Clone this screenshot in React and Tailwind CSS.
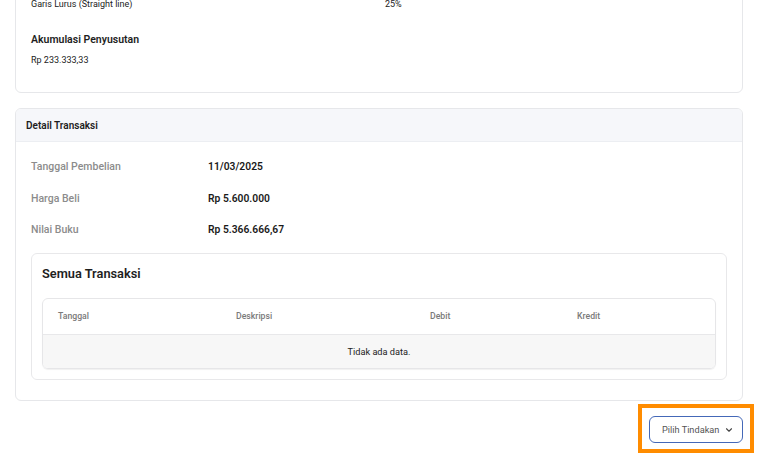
import React from "react";

function Chevron() {
  return (
    <svg width="10" height="10" viewBox="0 0 24 24" fill="none" stroke="#444" strokeWidth="2.6" strokeLinecap="round" strokeLinejoin="round">
      <path d="M6 9l6 6 6-6" />
    </svg>
  );
}

export default function App() {
  const font = { fontFamily: "Roboto, 'Noto Sans', sans-serif" };
  return (
    <div className="w-[759px] h-[459px] overflow-hidden bg-white" style={font}>
      <div className="pl-[15px] pr-[16px]">
        {/* top card (scrolled) */}
        <div className="-mt-[20px] border border-[#e6e7ea] rounded-[6px] px-[15px] pt-[16px] pb-[25px]">
          <div className="grid grid-cols-2 gap-3 text-[9px] text-[#222] leading-[14px]">
            <div>Garis Lurus (Straight line)</div>
            <div>25%</div>
          </div>
          <div className="mt-[22px] text-[10.5px] font-semibold text-[#1e1e1e] leading-[14px]">Akumulasi Penyusutan</div>
          <div className="mt-[6px] text-[9px] text-[#222] leading-[14px]">Rp 233.333,33</div>
        </div>

        {/* detail transaksi */}
        <div className="mt-[15px] border border-[#e6e7ea] rounded-[6px] overflow-hidden">
          <div className="h-[33px] bg-[#f6f7fa] border-b border-[#eceef2] flex items-center px-[10px]">
            <span className="text-[10px] font-semibold text-[#1e1e1e]">Detail Transaksi</span>
          </div>
          <div className="px-[15px] pt-[18px] pb-[20px]">
            <div className="flex flex-col gap-[17.5px]">
              {[
                ["Tanggal Pembelian", "11/03/2025"],
                ["Harga Beli", "Rp 5.600.000"],
                ["Nilai Buku", "Rp 5.366.666,67"],
              ].map(([l, v]) => (
                <div key={l} className="flex items-center h-[14px]">
                  <div className="w-[177px] text-[10.5px] font-medium text-[#8c8c8c]">{l}</div>
                  <div className="text-[10.3px] font-semibold text-[#1a1a1a]">{v}</div>
                </div>
              ))}
            </div>

            <div className="mt-[16px] border border-[#e8e8ea] rounded-[6px] px-[10px] pt-[11px] pb-[10px]">
              <div className="text-[12.8px] font-semibold text-[#1e1e1e] leading-[18px]">Semua Transaksi</div>
              <div className="mt-[15px] border border-[#e6e6e8] rounded-[6px] overflow-hidden shadow-[0_1px_1px_rgba(0,0,0,0.06)]">
                <div className="flex h-[36px] items-center border-b border-[#e8e8ea] text-[8.7px] font-medium text-[#7a7a7a]">
                  <div className="w-[178px] pl-[15px]">Tanggal</div>
                  <div className="w-[194px] pl-[15px]">Deskripsi</div>
                  <div className="w-[147px] pl-[15px]">Debit</div>
                  <div className="flex-1 pl-[15px]">Kredit</div>
                </div>
                <div className="h-[33px] bg-[#f7f7f7] flex items-center justify-center text-[9.2px] text-[#222]">
                  Tidak ada data.
                </div>
              </div>
            </div>
          </div>
        </div>

        {/* action */}
        <div className="mt-[3px] flex justify-end -mr-[11px]">
          <div className="border-4 border-[#ff8c00] pl-[7px] pr-[7px] pt-[8px] pb-[6px]">
            <button className="h-[27px] w-[94px] flex items-center justify-between pl-[12px] pr-[8px] border border-[#4468b8] rounded-[6px] bg-white whitespace-nowrap text-[9.2px] text-[#555]">
              <span>Pilih Tindakan</span>
              <Chevron />
            </button>
          </div>
        </div>
      </div>
    </div>
  );
}
